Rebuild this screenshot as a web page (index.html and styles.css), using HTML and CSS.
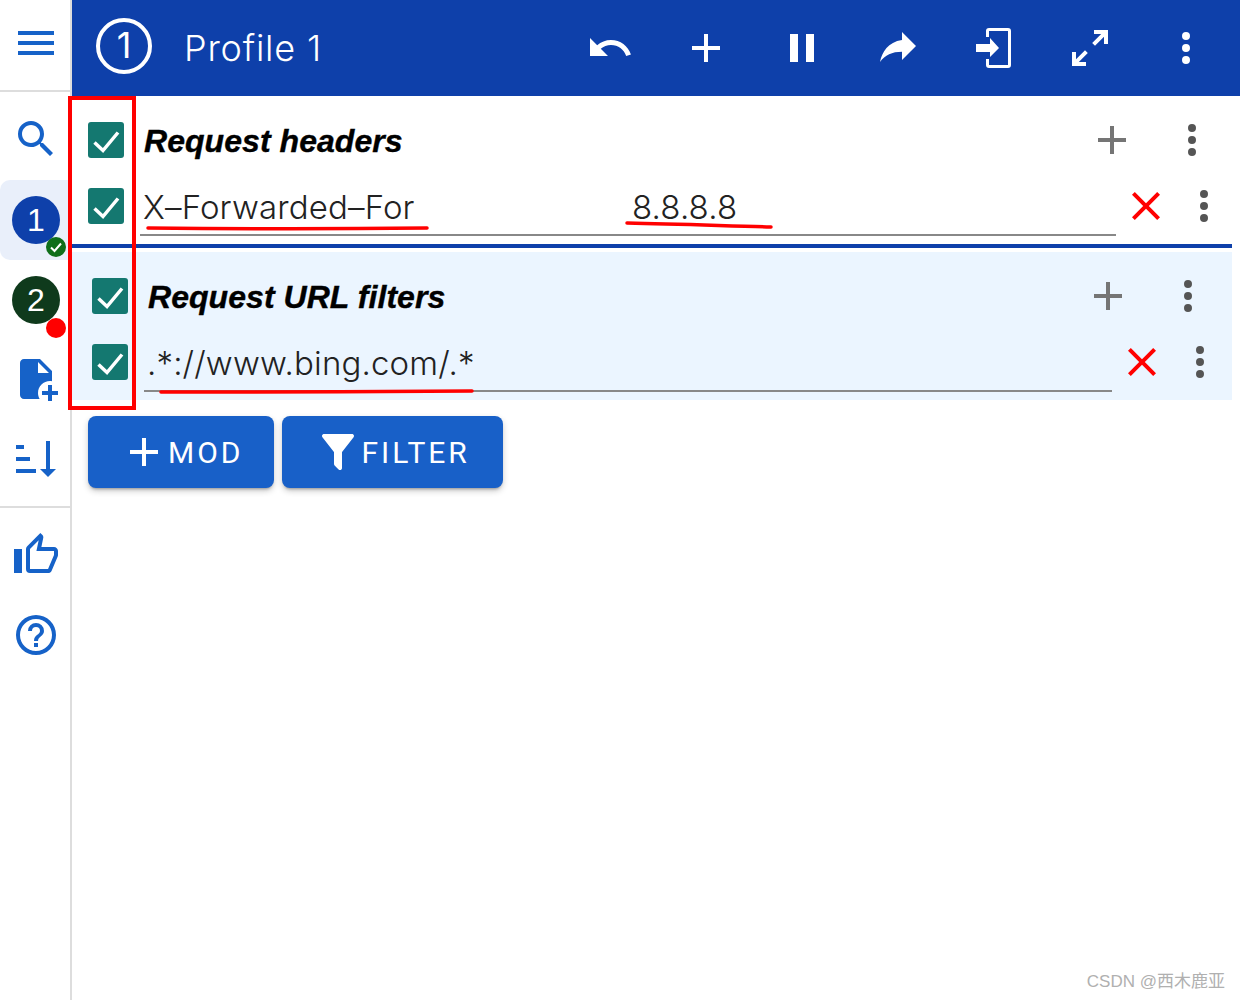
FILE: index.html
```html
<!DOCTYPE html>
<html lang="en">
<head>
    <meta charset="UTF-8">
    <title>ModHeader</title>
    <link rel="stylesheet" href="styles.css">
</head>
<body>
    <div class="app">
        <aside class="sidebar">
            <div class="side-menu">
                <svg class="icon" viewBox="0 0 24 24"><path d="M3,6H21V8H3V6M3,11H21V13H3V11M3,16H21V18H3V16Z"/></svg>
            </div>
            <nav class="side-group side-group-top">
                <div class="side-search">
                    <svg class="icon" viewBox="0 0 24 24"><path d="M9.5,3A6.5,6.5 0 0,1 16,9.5C16,11.11 15.41,12.59 14.44,13.73L14.71,14H15.5L20.5,19L19,20.5L14,15.5V14.71L13.73,14.44C12.59,15.41 11.11,16 9.5,16A6.5,6.5 0 0,1 3,9.5A6.5,6.5 0 0,1 9.5,3M9.5,5C7,5 5,7 5,9.5C5,12 7,14 9.5,14C12,14 14,12 14,9.5C14,7 12,5 9.5,5Z"/></svg>
                </div>
                <div class="side-tab side-tab-active">
                    <div class="avatar avatar-blue">1
                        <span class="badge badge-green">
                            <svg viewBox="0 0 20 20"><path d="M5 10.5l3.5 3.5 6.5-7.5"/></svg>
                        </span>
                    </div>
                </div>
                <div class="side-tab side-tab-second">
                    <div class="avatar avatar-green">2
                        <span class="badge badge-red"></span>
                    </div>
                </div>
                <div class="side-item">
                    <svg class="icon" viewBox="0 0 24 24"><path d="M14 2H6C4.89 2 4 2.89 4 4V20C4 21.11 4.89 22 6 22H13.81C13.28 21.09 13 20.05 13 19C13 15.69 15.69 13 19 13C19.34 13 19.67 13.03 20 13.08V8L14 2M13 9V3.5L18.5 9H13M18 15V18H15V20H18V23H20V20H23V18H20V15H18Z"/></svg>
                </div>
                <div class="side-item">
                    <svg class="icon" viewBox="0 0 24 24"><path d="M19 17H22L18 21L14 17H17V3H19M2 17H12V19H2M6 5V7H2V5M2 11H9V13H2V11Z"/></svg>
                </div>
            </nav>
            <nav class="side-group side-group-bottom">
                <div class="side-item">
                    <svg class="icon" viewBox="0 0 24 24"><path d="M5,9V21H1V9H5M9,21A2,2 0 0,1 7,19V9C7,8.45 7.22,7.95 7.59,7.59L14.17,1L15.23,2.06C15.5,2.33 15.67,2.7 15.67,3.11L15.64,3.43L14.69,8H21C22.11,8 23,8.9 23,10V12C23,12.26 22.95,12.5 22.85,12.77L19.83,19.82C19.53,20.54 18.82,21 18,21H9M9,19H18.03L21,12V10H12.21L13.34,4.68L9,9.03V19Z"/></svg>
                </div>
                <div class="side-item">
                    <svg class="icon" viewBox="0 0 24 24"><path d="M11,18H13V16H11V18M12,2A10,10 0 0,0 2,12A10,10 0 0,0 12,22A10,10 0 0,0 22,12A10,10 0 0,0 12,2M12,20C7.59,20 4,16.41 4,12C4,7.59 7.59,4 12,4C16.41,4 20,7.59 20,12C20,16.41 16.41,20 12,20M12,6A4,4 0 0,0 8,10H10A2,2 0 0,1 12,8A2,2 0 0,1 14,10C14,12 11,11.75 11,15H13C13,12.75 16,12.5 16,10A4,4 0 0,0 12,6Z"/></svg>
                </div>
            </nav>
        </aside>

        <main class="main">
            <header class="topbar">
                <div class="profile-circle">1</div>
                <div class="profile-name">Profile 1</div>
                <div class="topbar-actions">
                    <svg class="icon" viewBox="0 0 24 24"><path d="M12.5,8C9.85,8 7.45,9 5.6,10.6L2,7V16H11L7.38,12.38C8.77,11.22 10.54,10.5 12.5,10.5C16.04,10.5 19.05,12.81 20.1,16L22.47,15.22C21.08,11.03 17.15,8 12.5,8Z"/></svg>
                    <svg class="icon" viewBox="0 0 24 24"><path d="M19,13H13V19H11V13H5V11H11V5H13V11H19V13Z"/></svg>
                    <svg class="icon" viewBox="0 0 24 24"><path d="M14,19H18V5H14M6,19H10V5H6V19Z"/></svg>
                    <svg class="icon" viewBox="0 0 24 24"><path d="M21,11L14,4V8C7,9 4,14 3,19C5.5,15.5 9,13.9 14,13.9V18L21,11Z"/></svg>
                    <svg class="icon" viewBox="0 0 48 48"><path d="M19 4H38a3 3 0 0 1 3 3V41a3 3 0 0 1-3 3H19a3 3 0 0 1-3-3V35h3v6H38V7H19v6H16V7a3 3 0 0 1 3-3z"/><path d="M6 20H20V14L29 24L20 33V28H6Z"/></svg>
                    <svg class="icon" viewBox="0 0 24 24"><path d="M10,21V19H6.41L10.91,14.5L9.5,13.09L5,17.59V14H3V21H10M14.5,10.91L19,6.41V10H21V3H14V5H17.59L13.09,9.5L14.5,10.91Z"/></svg>
                    <svg class="icon" viewBox="0 0 24 24"><path d="M12,16A2,2 0 0,1 14,18A2,2 0 0,1 12,20A2,2 0 0,1 10,18A2,2 0 0,1 12,16M12,10A2,2 0 0,1 14,12A2,2 0 0,1 12,14A2,2 0 0,1 10,12A2,2 0 0,1 12,10M12,4A2,2 0 0,1 14,6A2,2 0 0,1 12,8A2,2 0 0,1 10,6A2,2 0 0,1 12,4Z"/></svg>
                </div>
            </header>

            <section class="section section-headers">
                <div class="row">
                    <span class="checkbox"><svg viewBox="0 0 36 36"><path d="M6.5 20.5l8.5 8L30 10.5"/></svg></span>
                    <div class="section-title">Request headers</div>
                    <svg class="icon icon-gray add-btn" viewBox="0 0 24 24"><path d="M19,13H13V19H11V13H5V11H11V5H13V11H19V13Z"/></svg>
                    <svg class="icon icon-dark" viewBox="0 0 24 24"><path d="M12,16A2,2 0 0,1 14,18A2,2 0 0,1 12,20A2,2 0 0,1 10,18A2,2 0 0,1 12,16M12,10A2,2 0 0,1 14,12A2,2 0 0,1 12,14A2,2 0 0,1 10,12A2,2 0 0,1 12,10M12,4A2,2 0 0,1 14,6A2,2 0 0,1 12,8A2,2 0 0,1 10,6A2,2 0 0,1 12,4Z"/></svg>
                </div>
                <div class="row row-field">
                    <span class="checkbox"><svg viewBox="0 0 36 36"><path d="M6.5 20.5l8.5 8L30 10.5"/></svg></span>
                    <div class="field">
                        <span class="field-name">X–Forwarded–For</span>
                        <span class="field-value">8.8.8.8</span>
                    </div>
                    <svg class="icon icon-red" viewBox="0 0 24 24"><path d="M19,6.41L17.59,5L12,10.59L6.41,5L5,6.41L10.59,12L5,17.59L6.41,19L12,13.41L17.59,19L19,17.59L13.41,12L19,6.41Z"/></svg>
                    <svg class="icon icon-dark" viewBox="0 0 24 24"><path d="M12,16A2,2 0 0,1 14,18A2,2 0 0,1 12,20A2,2 0 0,1 10,18A2,2 0 0,1 12,16M12,10A2,2 0 0,1 14,12A2,2 0 0,1 12,14A2,2 0 0,1 10,12A2,2 0 0,1 12,10M12,4A2,2 0 0,1 14,6A2,2 0 0,1 12,8A2,2 0 0,1 10,6A2,2 0 0,1 12,4Z"/></svg>
                </div>
            </section>

            <section class="section section-filters">
                <div class="row">
                    <span class="checkbox"><svg viewBox="0 0 36 36"><path d="M6.5 20.5l8.5 8L30 10.5"/></svg></span>
                    <div class="section-title">Request URL filters</div>
                    <svg class="icon icon-gray add-btn" viewBox="0 0 24 24"><path d="M19,13H13V19H11V13H5V11H11V5H13V11H19V13Z"/></svg>
                    <svg class="icon icon-dark" viewBox="0 0 24 24"><path d="M12,16A2,2 0 0,1 14,18A2,2 0 0,1 12,20A2,2 0 0,1 10,18A2,2 0 0,1 12,16M12,10A2,2 0 0,1 14,12A2,2 0 0,1 12,14A2,2 0 0,1 10,12A2,2 0 0,1 12,10M12,4A2,2 0 0,1 14,6A2,2 0 0,1 12,8A2,2 0 0,1 10,6A2,2 0 0,1 12,4Z"/></svg>
                </div>
                <div class="row row-field">
                    <span class="checkbox"><svg viewBox="0 0 36 36"><path d="M6.5 20.5l8.5 8L30 10.5"/></svg></span>
                    <div class="field">
                        <span class="field-name">.*://www.bing.com/.*</span>
                    </div>
                    <svg class="icon icon-red" viewBox="0 0 24 24"><path d="M19,6.41L17.59,5L12,10.59L6.41,5L5,6.41L10.59,12L5,17.59L6.41,19L12,13.41L17.59,19L19,17.59L13.41,12L19,6.41Z"/></svg>
                    <svg class="icon icon-dark" viewBox="0 0 24 24"><path d="M12,16A2,2 0 0,1 14,18A2,2 0 0,1 12,20A2,2 0 0,1 10,18A2,2 0 0,1 12,16M12,10A2,2 0 0,1 14,12A2,2 0 0,1 12,14A2,2 0 0,1 10,12A2,2 0 0,1 12,10M12,4A2,2 0 0,1 14,6A2,2 0 0,1 12,8A2,2 0 0,1 10,6A2,2 0 0,1 12,4Z"/></svg>
                </div>
            </section>

            <div class="actions">
                <button class="btn">
                    <svg class="icon" viewBox="0 0 24 24"><path d="M19,13H13V19H11V13H5V11H11V5H13V11H19V13Z"/></svg>
                    MOD
                </button>
                <button class="btn btn-filter">
                    <svg class="icon" viewBox="0 0 24 24"><path d="M14,12V19.88C14.04,20.18 13.94,20.5 13.71,20.71C13.32,21.1 12.69,21.1 12.3,20.71L10.29,18.7C10.06,18.47 9.96,18.16 10,17.87V12H9.97L4.21,4.62C3.87,4.19 3.95,3.56 4.38,3.22C4.57,3.08 4.78,3 5,3V3H19V3C19.22,3 19.43,3.08 19.62,3.22C20.05,3.56 20.13,4.19 19.79,4.62L14.03,12H14Z"/></svg>
                    FILTER
                </button>
            </div>
        </main>
    </div>

    <!-- red annotations drawn over the screenshot -->
    <div class="mark-box"></div>
    <svg class="mark-lines" viewBox="0 0 1240 1000">
        <path d="M148 228C240 229 340 229 427 228"/>
        <path d="M627 223C680 224 730 226 771 227"/>
        <path d="M161 392C260 392 370 392 472 391"/>
    </svg>
    <div class="watermark">CSDN @西木鹿亚</div>
</body>
</html>
```

FILE: styles.css
```css
* {
    box-sizing: border-box;
}

body {
    margin: 0;
    background-color: #fff;
    font-family: 'Inter', 'Liberation Sans', sans-serif;
    overflow: hidden;
}

.app {
    display: flex;
    height: 1000px;
}

.icon {
    display: block;
    width: 48px;
    height: 48px;
    flex: none;
    fill: currentColor;
}

/* sidebar */
.sidebar {
    width: 72px;
    flex: none;
    border-right: 2px solid #ddd;
    color: #1662c8;
}

.side-menu {
    height: 92px;
    padding: 19px 0 0 12px;
    border-bottom: 2px solid #ddd;
}

.side-group-top {
    height: 416px;
    border-bottom: 2px solid #ddd;
}

.side-group-bottom {
    padding-top: 7px;
}

.side-search {
    height: 88px;
    padding: 23px 0 0 12px;
}

.side-item {
    height: 80px;
    padding: 16px 0 0 12px;
}

.side-tab {
    height: 80px;
    padding: 16px 0 0 12px;
}

.side-tab-active {
    background-color: #e9effa;
    border-radius: 10px 0 0 10px;
    margin-right: 2px;
}

.side-tab-second {
    height: 79px;
}

.avatar {
    position: relative;
    width: 48px;
    height: 48px;
    border-radius: 50%;
    color: #fff;
    font-family: 'Liberation Sans', sans-serif;
    font-size: 32px;
    line-height: 48px;
    text-align: center;
}

.avatar-blue {
    background-color: #0e40aa;
}

.avatar-green {
    background-color: #0f3a1c;
}

.badge {
    position: absolute;
    left: 34px;
    top: 41px;
    width: 20px;
    height: 20px;
    border-radius: 50%;
}

.badge svg {
    display: block;
    fill: none;
    stroke: #fff;
    stroke-width: 2;
}

.badge-green {
    background-color: #0f6e1a;
}

.badge-red {
    top: 42px;
    background-color: #f00;
}

/* main */
.main {
    flex: 1;
    min-width: 0;
}

.topbar {
    display: flex;
    align-items: center;
    height: 96px;
    padding-left: 24px;
    background-color: #0e40aa;
    color: #fff;
}

.profile-circle {
    width: 56px;
    height: 56px;
    margin-top: -4px;
    border: 4px solid #fff;
    border-radius: 50%;
    font-size: 36px;
    font-weight: 400;
    line-height: 46px;
    text-align: center;
}

.profile-name {
    margin-left: 32px;
    font-size: 36px;
    font-weight: 300;
    letter-spacing: 0.8px;
}

.topbar-actions {
    display: flex;
    gap: 48px;
    margin-left: auto;
    padding-right: 30px;
}

.section {
    width: 1160px;
    padding-top: 20px;
}

.section-headers {
    height: 152px;
    padding-left: 16px;
    border-bottom: 4px solid #0e40aa;
}

.section-filters {
    height: 148px;
    margin-top: 4px;
    padding-left: 20px;
    background-color: #ebf5ff;
}

.row {
    display: flex;
    align-items: center;
    height: 48px;
    margin-bottom: 18px;
}

.checkbox {
    width: 36px;
    height: 36px;
    flex: none;
    border-radius: 3px;
    background-color: #147870;
}

.checkbox svg {
    display: block;
    fill: none;
    stroke: #fff;
    stroke-width: 3.5;
}

.section-title {
    flex: 1;
    margin-left: 20px;
    padding-top: 2px;
    font-family: 'Liberation Sans', sans-serif;
    font-size: 32px;
    font-style: italic;
    font-weight: bold;
    letter-spacing: 0.05px;
    -webkit-text-stroke: 0.4px #000;
    color: #000;
}

.add-btn {
    margin-right: 32px;
}

.section-headers .row {
    padding-right: 16px;
}

.section-headers .row-field {
    padding-right: 4px;
}

.section-filters .row {
    padding-right: 20px;
}

.section-filters .row-field {
    padding-right: 8px;
}

.row-field .icon-red {
    margin-left: 6px;
    margin-right: 10px;
}

.icon-gray {
    color: #757575;
}

.icon-dark {
    color: #555;
}

.icon-red {
    color: #f00;
}

.field {
    display: flex;
    flex: 1;
    align-self: flex-start;
    height: 54px;
    margin-left: 16px;
    padding-left: 3px;
    border-bottom: 2px solid #888;
    font-size: 33px;
    font-weight: 300;
    letter-spacing: 0.15px;
    line-height: 50px;
    color: #222;
}

.field-name {
    width: 489px;
    white-space: nowrap;
}

.actions {
    display: flex;
    gap: 8px;
    margin-top: 16px;
    padding-left: 16px;
}

.btn {
    display: flex;
    align-items: center;
    height: 72px;
    padding: 0 30px 0 32px;
    border: none;
    border-radius: 8px;
    background-color: #1860c8;
    box-shadow: 0 3px 3px -2px rgba(0, 0, 0, 0.3), 0 3px 6px 0 rgba(0, 0, 0, 0.2);
    color: #fff;
    font-family: 'Roboto', sans-serif;
    font-size: 30px;
    font-weight: 400;
    letter-spacing: 3px;
}

.btn-filter {
    padding-right: 33px;
}

/* annotations */
.mark-box {
    position: absolute;
    left: 68px;
    top: 96px;
    width: 68px;
    height: 314px;
    border: 4px solid #f00;
}

.mark-lines {
    position: absolute;
    left: 0;
    top: 0;
    width: 1240px;
    height: 1000px;
    fill: none;
    stroke: #f00;
    stroke-width: 3.5;
    stroke-linecap: round;
}

.watermark {
    position: absolute;
    right: 15px;
    top: 971px;
    color: #b0b0b0;
    font-family: 'Liberation Sans', 'Noto Sans CJK SC', sans-serif;
    font-size: 17px;
    line-height: 22px;
    white-space: nowrap;
}
```
